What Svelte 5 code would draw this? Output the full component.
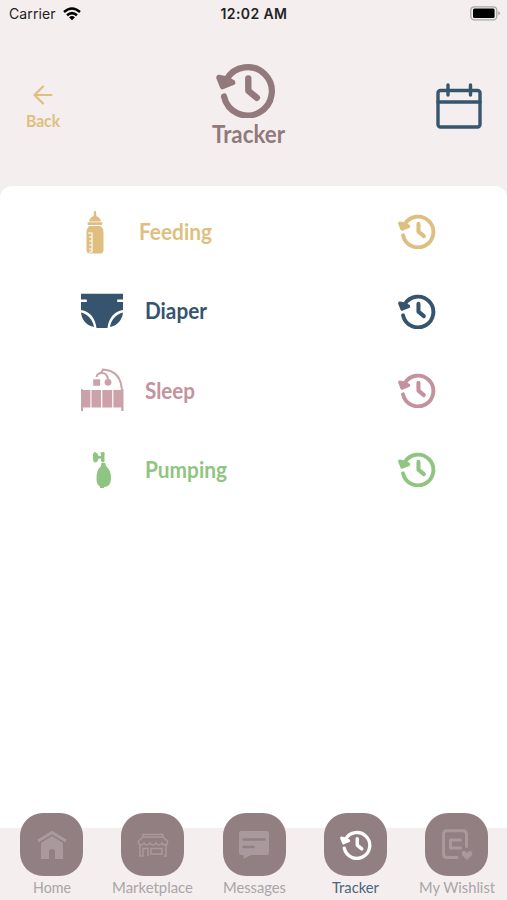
<script>
	const rows = [
		{ id: "feeding", label: "Feeding", color: "#dfbf80", width: 73 },
		{ id: "diaper", label: "Diaper", color: "#36546d", width: 62 },
		{ id: "sleep", label: "Sleep", color: "#c4929c", width: 50 },
		{ id: "pumping", label: "Pumping", color: "#90c581", width: 82 }
	];

	const tabs = [
		{ id: "home", label: "Home", width: 38 },
		{ id: "market", label: "Marketplace", width: 81 },
		{ id: "messages", label: "Messages", width: 63 },
		{ id: "tracker", label: "Tracker", width: 47 },
		{ id: "wishlist", label: "My Wishlist", width: 76 }
	];

	let active = $state("tracker");
</script>

{#snippet history()}
	<svg class="history" viewBox="0 0 60 55" fill="none" stroke="currentColor" stroke-linecap="round" stroke-linejoin="round">
		<path d="M8 33.5A24.2 24.2 0 1 0 10.5 16.5" stroke-width="6.2" />
		<path d="M3 14.5L6.6 23.5L16.5 19.5L10 16Z" fill="currentColor" stroke-width="5.6" />
		<path d="M32.3 15.5V27.7L40.8 34.8" stroke-width="6.4" />
	</svg>
{/snippet}

{#snippet label(text, width, size, weight)}
	<svg class="label" {width} height={size * 1.4} fill="currentColor">
		<text x="0" y={size} font-size={size} font-weight={weight} textLength={width} lengthAdjust="spacingAndGlyphs">{text}</text>
	</svg>
{/snippet}

<main>
	<div class="status">
		<div class="carrier">
			<span>Carrier</span>
			<svg width="18" height="14" viewBox="0 0 18 14" fill="none" stroke="#000" stroke-width="2.5">
				<path d="M1 5Q9 -2 17 5M4 8.3Q9 4 14 8.3" />
				<path d="M6 10.2Q9 7.8 12 10.2L9 13.3Z" fill="#000" stroke="none" />
			</svg>
		</div>
		<strong>12:02 AM</strong>
		<svg class="battery" width="31" height="15" viewBox="0 0 31 15">
			<rect x=".8" y=".8" width="26" height="13" rx="3.5" fill="none" stroke="#aaa5a5" stroke-width="1.3" />
			<rect x="3" y="2.6" width="21.6" height="9.4" rx="1.5" />
			<path d="M28.2 5L30.5 7.3L28.2 9.6Z" fill="#aaa5a5" />
		</svg>
	</div>

	<header>
		<button class="back">
			<svg width="20" height="20" viewBox="0 0 20 20" fill="none" stroke="currentColor" stroke-width="2.2" stroke-linecap="round" stroke-linejoin="round">
				<path d="M18.5 10H1.5M10 1.5L1.5 10L10 18.5" />
			</svg>
			{@render label("Back", 34, 17, 700)}
		</button>
		<div class="title">
			{@render history()}
			{@render label("Tracker", 73, 24, 700)}
		</div>
		<button class="calendar" aria-label="Calendar">
			<svg width="46" height="46" viewBox="0 0 46 46" fill="none" stroke="currentColor" stroke-width="3.4" stroke-linecap="round">
				<rect x="2" y="7.5" width="42" height="36.5" rx="2.5" />
				<path d="M2 19H44M12 2V12M34.5 2V12" />
			</svg>
		</button>
	</header>

	<section>
		{#each rows as row}
			<div class="row {row.id}" style="color:{row.color}">
				<div class="picture">
					{#if row.id === "feeding"}
						<svg width="18" height="44" viewBox="0 0 18 44" fill="currentColor">
							<path d="M8 1.5Q9 .2 10 1.5L10.4 6Q14.5 8 15 11.4H3Q3.5 8 7.6 6Z" />
							<rect x="1.5" y="12.3" width="15" height="2.6" rx="1.2" />
							<path d="M3.2 16H14.8Q17.5 18.5 17.5 22V40Q17.5 43.5 14 43.5H4Q.5 43.5 .5 40V22Q.5 18.5 3.2 16Z" />
							<path d="M2 23H6V42H3M3 27H6M3 31H6M3 35H6M3 39H6" fill="none" stroke="#fff" stroke-width="1.1" />
						</svg>
					{:else if row.id === "diaper"}
						<svg width="44" height="36" viewBox="0 0 44 36" fill="currentColor">
							<path d="M1 .7H43V6.5H37.2V9H43V17C34 18 28.7 25.5 27.5 35H16.5C15.3 25.5 10 18 1 17V9H6.8V6.5H1Z" />
							<path d="M1 19.5C8 21 13 27 14 34C6.5 32.5 1.8 27 1 19.5ZM43 19.5C36 21 31 27 30 34C37.5 32.5 42.2 27 43 19.5Z" />
						</svg>
					{:else if row.id === "sleep"}
						<svg width="44" height="44" viewBox="0 0 44 44" fill="currentColor" opacity=".85">
							<path d="M1 21H2.7V22H10.4V39.5H3V43H1ZM11.5 22H21V39.5H11.5ZM22.3 22H32.2V39.5H22.3ZM33.4 22H41.5V21H43.5V43H41.2V39.5H33.4Z" />
							<rect x="13.2" y="11.3" width="7" height="6.5" />
							<circle cx="28" cy="14.3" r="3.4" />
							<path d="M22 1.5Q42 2 42 25M23 1.5L21 5M16.5 9Q17 5 22 5Q27 5 28 11" fill="none" stroke="currentColor" stroke-width="2" />
						</svg>
					{:else}
						<svg width="20" height="38" viewBox="0 0 20 38" fill="currentColor">
							<path d="M1 4Q1 1 3.3 1Q5.6 2 6.7 5H9V3H8.7Q8 .5 10.8 1Q13.5 1 12.5 4V10.5Q10.5 12.5 9 10V7.5H6.7Q5.5 11.5 3 11.5Q1 11 1 7Z" />
							<path d="M9.5 12H13.2L14 15Q19.5 20 19 28Q18.5 36 12 36V37H8V35.5Q4.7 34 4.5 28Q4.2 19.5 9 15Z" />
						</svg>
					{/if}
				</div>
				<div class="name">{@render label(row.label, row.width, 23, 700)}</div>
				{@render history()}
			</div>
		{/each}
	</section>

	<nav>
		{#each tabs as tab}
			<button class="tab" class:active={active === tab.id} onclick={() => (active = tab.id)}>
				<div class="tile">
					{#if tab.id === "home"}
						<svg width="32" height="30" viewBox="0 0 32 30" fill="currentColor">
							<path d="M2 11L16 2.5L30 11" fill="none" stroke="currentColor" stroke-width="3.2" />
							<path d="M5 13L16 6L27 13V29H19V21.5Q19 19 16 19Q13 19 13 21.5V29H5Z" />
						</svg>
					{:else if tab.id === "market"}
						<svg width="32" height="26" viewBox="0 0 32 26" fill="none" stroke="currentColor" stroke-width="1.5">
							<path d="M6 5V2.5H26V5M6 5H26L30.5 9Q31 13 28 13Q25.5 13 25 11Q24 13 22 13Q20 13 19 11Q18 13 16 13Q14 13 13 11Q12 13 10 13Q8 13 7 11Q6 13 4 13Q1 13 1.5 9ZM3 13V24H6V16.5H11V24M29 13V24H27M14 16.5H25V22H14Z" />
						</svg>
					{:else if tab.id === "messages"}
						<svg width="32" height="30" viewBox="0 0 32 30">
							<path d="M3.5 1H28.5Q31 1 31 3.5V22.5Q31 25 28.5 25H13L5.5 29V25H3.5Q1 25 1 22.5V3.5Q1 1 3.5 1Z" fill="currentColor" />
							<path d="M5.5 9.5H26.5M5.5 17H15.5" stroke="#927f82" stroke-width="2.5" stroke-linecap="round" />
						</svg>
					{:else if tab.id === "tracker"}
						{@render history()}
					{:else}
						<svg width="32" height="32" viewBox="0 0 32 32" fill="none" stroke="currentColor" stroke-width="3">
							<path d="M16 28.5H6Q2.5 28.5 2.5 25V5Q2.5 1.8 6 1.8H22Q25.5 1.8 25.5 5V17.5M9.5 11H19.5M9.5 19H19.5M9.5 11V19" stroke-linecap="round" />
							<path d="M26 31L21 26Q19.7 22 23 22Q25 22 26 24Q27 22 29 22Q32.3 22 31 26Z" fill="currentColor" stroke="none" />
						</svg>
					{/if}
				</div>
				{@render label(tab.label, tab.width, 16, 400)}
			</button>
		{/each}
	</nav>
</main>

<style>
	:global(body) {
		background: #f4eeee;
	}
	main {
		height: 900px;
		display: flex;
		flex-direction: column;
		background: #f4eeee;
		font-family: Lato, sans-serif;
	}
	button {
		padding: 0;
		border: 0;
		background: none;
		color: inherit;
		font: inherit;
	}
	svg {
		display: block;
		flex: none;
	}
	.label {
		overflow: visible;
	}

	.status {
		height: 27px;
		padding: 0 6px 0 9px;
		display: grid;
		grid-template-columns: 1fr auto 1fr;
		align-items: center;
		box-sizing: border-box;
		font-family: Inter, sans-serif;
		font-size: 14px;
		color: #222;
	}
	.status strong {
		font-weight: 600;
		letter-spacing: 0.4px;
		margin-right: 2px;
	}
	.carrier {
		display: flex;
		align-items: center;
		gap: 7px;
		letter-spacing: 0.1px;
	}
	.battery {
		justify-self: end;
	}

	header {
		height: 159px;
		padding: 0 25px 0 26px;
		display: grid;
		grid-template-columns: 1fr auto 1fr;
		box-sizing: border-box;
	}
	.back {
		justify-self: start;
		align-self: start;
		padding-top: 58px;
		display: flex;
		flex-direction: column;
		align-items: center;
		gap: 5px;
		color: #dfbf80;
	}
	.title {
		padding: 36px 12px 0 0;
		display: flex;
		flex-direction: column;
		align-items: center;
		color: #91797c;
	}
	.title .history {
		width: 60px;
		height: 55px;
		margin-right: 5px;
	}
	.title .label {
		margin-top: 1px;
	}
	.calendar {
		justify-self: end;
		align-self: start;
		padding-top: 56px;
		color: #36566e;
	}

	section {
		height: 642px;
		padding: 6px 71px 0 80px;
		box-sizing: border-box;
		border-radius: 12px 12px 0 0;
		background: #fff;
	}
	.row {
		height: 79.4px;
		display: flex;
		align-items: center;
	}
	.picture {
		width: 44px;
		display: flex;
		justify-content: center;
	}
	.name {
		flex: 1;
		padding: 3px 0 0 21px;
	}
	.feeding .picture {
		width: 30px;
	}
	.feeding .name {
		padding-left: 29px;
	}
	.row .history {
		width: 38px;
		height: 35px;
	}

	nav {
		flex: 1;
		display: grid;
		grid-template-columns: repeat(5, 101.3px);
		margin-top: -15px;
		padding-left: 1px;
		align-items: start;
	}
	.tab {
		display: flex;
		flex-direction: column;
		align-items: center;
		gap: 1px;
		color: #aaa5a9;
	}
	.tile {
		width: 63px;
		height: 63px;
		display: flex;
		align-items: center;
		justify-content: center;
		border-radius: 23px;
		background: #927f82;
		color: #aa999c;
	}
	.tile .history {
		width: 32px;
		height: 30px;
	}
	.active {
		color: #4b657b;
	}
	.active .tile {
		color: #fff;
	}
</style>
